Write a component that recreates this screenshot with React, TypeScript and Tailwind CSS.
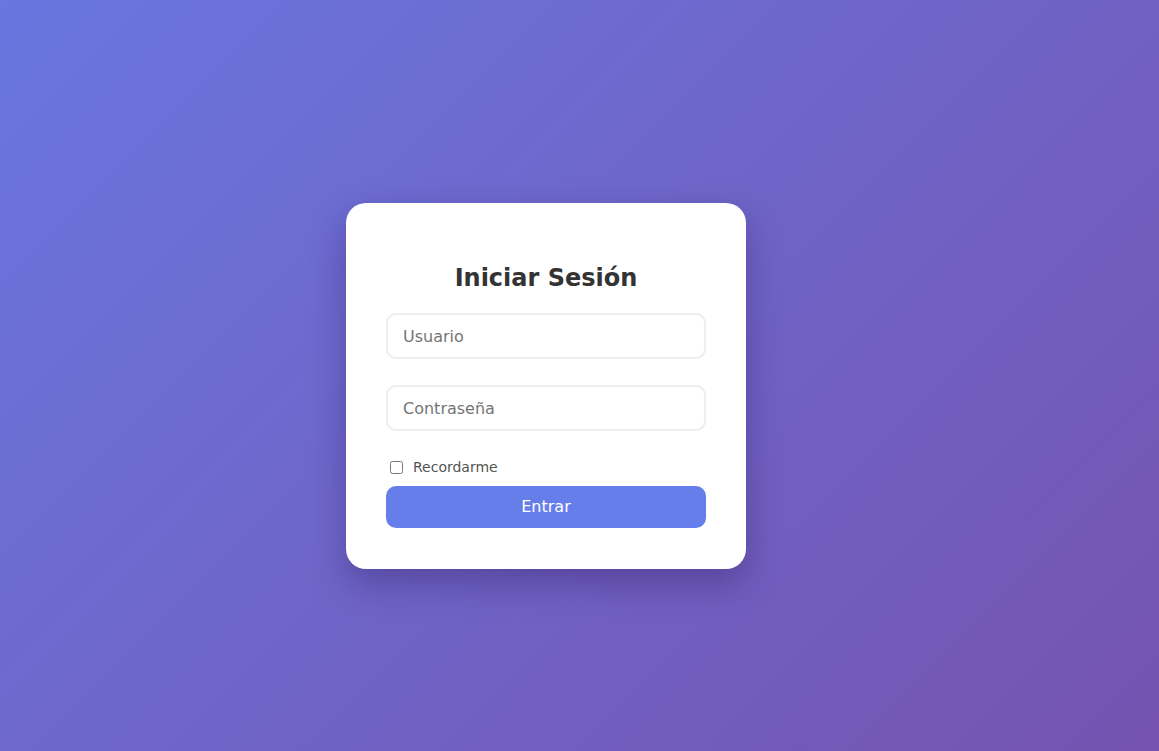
export default function App() {
    return (
        <div className="w-full h-[751px] flex items-center justify-center pr-[67px] pt-[21px] bg-[linear-gradient(135deg,#6976df_0%,#7553b0_100%)] font-['DejaVu_Sans',sans-serif]">
            <div className="w-[400px] bg-white rounded-[20px] px-10 pt-10 pb-[41px] shadow-[0_15px_35px_rgba(40,20,90,0.35)]">
                <h2 className="pt-5 h-[50px] leading-[30px] text-center text-2xl font-bold text-[#333]">Iniciar Sesión</h2>

                <div className="mt-5 flex flex-col gap-[26px]">
                    <input type="text" placeholder="Usuario" className="w-full h-[46px] px-[15px] border-2 border-[#eeeeee] rounded-[10px] text-base text-[#333] placeholder:text-[#757575] outline-none" />
                    <input type="password" placeholder="Contraseña" className="w-full h-[46px] px-[15px] border-2 border-[#eeeeee] rounded-[10px] text-base text-[#333] placeholder:text-[#757575] outline-none" />
                </div>

                <label className="mt-[26px] h-[20px] flex items-center gap-[10px] pl-1 text-sm text-[#555]">
                    <input type="checkbox" className="w-[13px] h-[13px] m-0" />
                    Recordarme
                </label>

                <button className="mt-[9px] w-full h-[42px] bg-[#667eea] text-white text-base rounded-[10px]">Entrar</button>
            </div>
        </div>
    );
}
